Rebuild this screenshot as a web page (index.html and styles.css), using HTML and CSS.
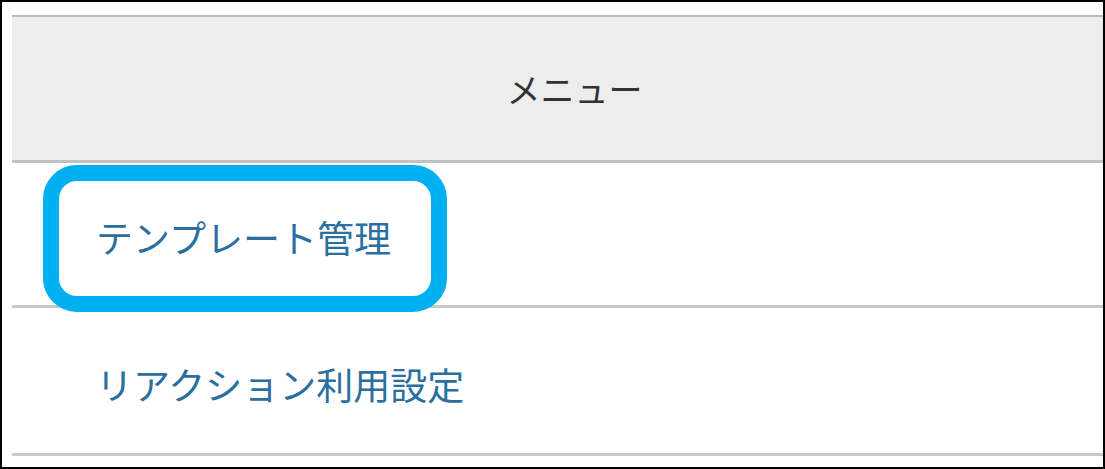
FILE: index.html
```html
<!DOCTYPE html>
<html lang="ja">

	<head>
		<meta charset="UTF-8">
		<title>メニュー</title>
		<link rel="stylesheet" href="styles.css">
	</head>

	<body>
		<div class="frame">
			<table class="menu">
				<thead>
					<tr>
						<th>メニュー</th>
					</tr>
				</thead>
				<tbody>
					<tr>
						<td><a href="#">テンプレート管理</a></td>
					</tr>
					<tr>
						<td><a href="#">リアクション利用設定</a></td>
					</tr>
				</tbody>
			</table>
			<!-- 注目枠 -->
			<div class="mark"></div>
		</div>
	</body>

</html>
```

FILE: styles.css
```css
body,
table,
th,
td {
	margin: 0;
	padding: 0;
}

body {
	background: #ffffff;
	font-family: "Noto Sans CJK JP", "Noto Sans", sans-serif;
}

.frame {
	width: 1105px;
	height: 469px;
	box-sizing: border-box;
	border: 2px solid #000000;
	padding: 13px 0 0 10px;
	position: relative;
}

.menu {
	width: 100%;
	border-collapse: collapse;
	border-top: 2px solid #bcbcbc;
}

.menu th {
	height: 143px;
	background: #ededed;
	border-bottom: 3px solid #c2c2c2;
	padding-left: 34px;
	font-size: 34px;
	font-weight: normal;
	color: #333333;
	text-align: center;
}

.menu td {
	height: 136px;
	border-bottom: 3px solid #c8c8c8;
	padding: 6px 0 0 84px;
	text-align: left;
}

.menu tbody tr:last-child td {
	height: 139px;
}

.menu a {
	font-size: 37px;
	color: #2b6f9f;
	text-decoration: none;
}

.mark {
	width: 404px;
	height: 147px;
	box-sizing: border-box;
	border: 16px solid #00b0f0;
	border-radius: 34px;
	position: absolute;
	left: 41px;
	top: 163px;
}
```
